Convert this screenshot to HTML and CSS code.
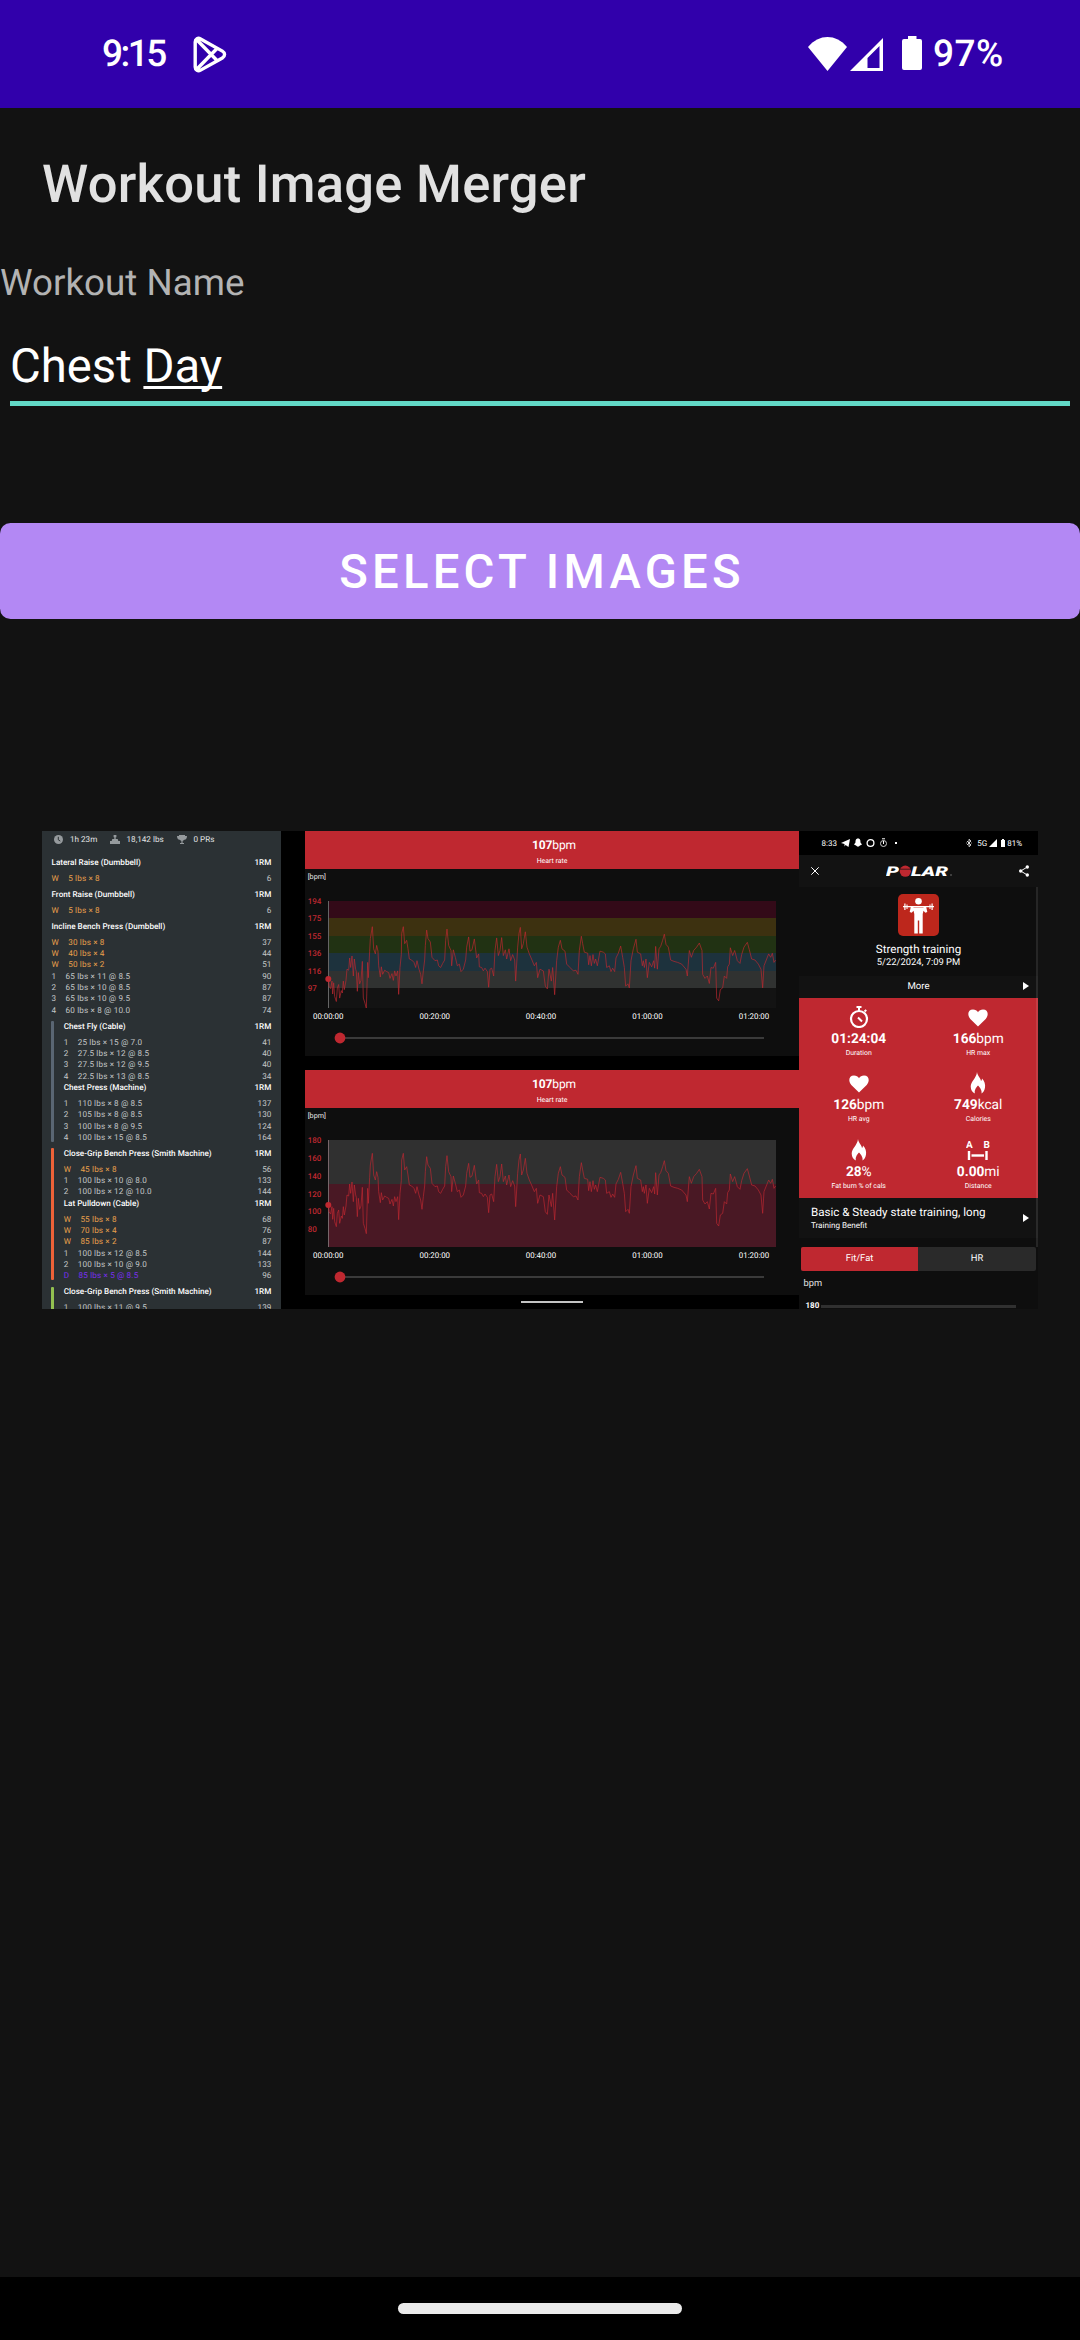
FILE: index.html
```html
<!DOCTYPE html>
<html lang="en">
<head>
<meta charset="utf-8">
<title>Workout Image Merger</title>
<link rel="stylesheet" href="styles.css">
</head>
<body>
<header class="status">
  <span class="clock">9:15</span>
  <svg class="play" viewBox="0 0 34 37" width="34" height="37"><path d="M2.200 6v25c0 3.200 2.800 4.600 5.400 3.100l21.800-12.200c2.900-1.700 2.900-5.100 0-6.800L7.600 2.900C5 1.400 2.200 2.800 2.200 6zM3.500 3.500l20.500 21M3.500 33.500l20.500-21" fill="none" stroke="#fff" stroke-width="3.400"/></svg>
  <svg class="wifi" viewBox="0 0 39 34" width="39" height="34"><path d="M0 10C11-3.300 28-3.300 39 10L19.500 34z" fill="#fff"/></svg>
  <svg class="signal" viewBox="0 0 33 33" width="33" height="33"><path d="M33 0v33H0zM29.500 8L17.500 20v10h12z" fill="#fff" fill-rule="evenodd"/></svg>
  <svg class="battery" viewBox="0 0 20 34" width="20" height="34"><path d="M6 0h8.500v3H18a2 2 0 0 1 2 2v27a2 2 0 0 1-2 2H2a2 2 0 0 1-2-2V5a2 2 0 0 1 2-2h4z" fill="#fff"/></svg>
  <span class="percent">97%</span>
</header>

<main class="app">
  <h1 class="title">Workout Image Merger</h1>
  <div class="label">Workout Name</div>
  <div class="field">Chest <span class="composing">Day</span></div>
  <button class="select">SELECT IMAGES</button>

  <section class="merged">
    <article class="log">
      <div class="summary">
        <svg class="s-clock" viewBox="0 0 9 9" width="9" height="9"><circle cx="4.500" cy="4.500" r="4.500" fill="#959a9d"/><path d="M4.300 1.800v3l2 1.300" fill="none" stroke="#2b3134" stroke-width="1"/></svg>
        <span class="s-time">1h 23m</span>
        <svg class="s-weight" viewBox="0 0 10 9" width="10" height="9"><path d="M3.600 0h2.800v2.200H5.700V4h2l.6 2H10v3H0V6h1.700l.6-2h2V2.200h-.7z" fill="#959a9d"/></svg>
        <span class="s-lbs">18,142 lbs</span>
        <svg class="s-cup" viewBox="0 0 10 9" width="10" height="9"><path d="M2 0h6v1h2c0 2.500-1 3.500-2.600 3.800L5.600 6v2H7v1H3V8h1.400V6L2.600 4.800C1 4.500 0 3.500 0 1h2z" fill="#959a9d"/></svg>
        <span>0 PRs</span>
      </div>
      <div class="exercise">
        <div class="name"><span>Lateral Raise (Dumbbell)</span><b>1RM</b></div>
        <div class="set warm"><i>W</i><span>5 lbs × 8</span><b>6</b></div>
      </div>
      <div class="exercise">
        <div class="name"><span>Front Raise (Dumbbell)</span><b>1RM</b></div>
        <div class="set warm"><i>W</i><span>5 lbs × 8</span><b>6</b></div>
      </div>
      <div class="exercise">
        <div class="name"><span>Incline Bench Press (Dumbbell)</span><b>1RM</b></div>
        <div class="set warm"><i>W</i><span>30 lbs × 8</span><b>37</b></div>
        <div class="set warm"><i>W</i><span>40 lbs × 4</span><b>44</b></div>
        <div class="set warm"><i>W</i><span>50 lbs × 2</span><b>51</b></div>
        <div class="set"><i>1</i><span>65 lbs × 11 @ 8.5</span><b>90</b></div>
        <div class="set"><i>2</i><span>65 lbs × 10 @ 8.5</span><b>87</b></div>
        <div class="set"><i>3</i><span>65 lbs × 10 @ 9.5</span><b>87</b></div>
        <div class="set"><i>4</i><span>60 lbs × 8 @ 10.0</span><b>74</b></div>
      </div>
      <div class="superset slate">
        <div class="name"><span>Chest Fly (Cable)</span><b>1RM</b></div>
        <div class="set"><i>1</i><span>25 lbs × 15 @ 7.0</span><b>41</b></div>
        <div class="set"><i>2</i><span>27.5 lbs × 12 @ 8.5</span><b>40</b></div>
        <div class="set"><i>3</i><span>27.5 lbs × 12 @ 9.5</span><b>40</b></div>
        <div class="set"><i>4</i><span>22.5 lbs × 13 @ 8.5</span><b>34</b></div>
        <div class="name"><span>Chest Press (Machine)</span><b>1RM</b></div>
        <div class="set"><i>1</i><span>110 lbs × 8 @ 8.5</span><b>137</b></div>
        <div class="set"><i>2</i><span>105 lbs × 8 @ 8.5</span><b>130</b></div>
        <div class="set"><i>3</i><span>100 lbs × 8 @ 9.5</span><b>124</b></div>
        <div class="set"><i>4</i><span>100 lbs × 15 @ 8.5</span><b>164</b></div>
      </div>
      <div class="superset orange">
        <div class="name"><span>Close-Grip Bench Press (Smith Machine)</span><b>1RM</b></div>
        <div class="set warm"><i>W</i><span>45 lbs × 8</span><b>56</b></div>
        <div class="set"><i>1</i><span>100 lbs × 10 @ 8.0</span><b>133</b></div>
        <div class="set"><i>2</i><span>100 lbs × 12 @ 10.0</span><b>144</b></div>
        <div class="name"><span>Lat Pulldown (Cable)</span><b>1RM</b></div>
        <div class="set warm"><i>W</i><span>55 lbs × 8</span><b>68</b></div>
        <div class="set warm"><i>W</i><span>70 lbs × 4</span><b>76</b></div>
        <div class="set warm"><i>W</i><span>85 lbs × 2</span><b>87</b></div>
        <div class="set"><i>1</i><span>100 lbs × 12 @ 8.5</span><b>144</b></div>
        <div class="set"><i>2</i><span>100 lbs × 10 @ 9.0</span><b>133</b></div>
        <div class="set drop"><i>D</i><span>85 lbs × 5 @ 8.5</span><b>96</b></div>
      </div>
      <div class="superset green">
        <div class="name"><span>Close-Grip Bench Press (Smith Machine)</span><b>1RM</b></div>
        <div class="set"><i>1</i><span>100 lbs × 11 @ 9.5</span><b>139</b></div>
      </div>
    </article>

    <article class="charts">
      <div class="chart">
        <div class="rate"><div class="bpm"><b>107</b>bpm</div><div class="caption">Heart rate</div></div>
        <svg class="plot" viewBox="0 0 494 187" width="494" height="187">
          <defs>
            <polyline id="trace" fill="none" stroke="#bf2830" stroke-width="2.200" stroke-opacity=".9" points="115,437 117,455 122,462 126,440 128,478 131,445 134,485 139,500 142,460 146,450 149,490 154,468 157,475 160,440 163,465 168,438 171,405 176,408 179,372 182,400 186,366 190,425 193,375 197,405 199,412 202,470 205,415 209,448 213,438 217,382 220,490 225,505 229,521 233,385 235,430 239,352 241,315 247,280 251,345 256,360 260,335 264,352 266,395 271,428 274,398 278,420 284,408 290,412 296,415 300,432 306,418 310,438 314,410 318,425 323,410 326,479 330,400 334,362 335,300 340,280 344,330 350,320 354,345 358,375 365,378 372,385 377,400 381,380 387,405 392,420 396,448 400,410 404,378 406,335 410,290 414,315 421,325 426,370 435,380 442,378 446,395 452,400 458,388 464,378 467,320 471,287 476,335 483,350 485,395 490,348 496,370 502,395 508,390 513,412 520,405 527,378 530,340 536,310 540,352 546,348 553,316 560,372 566,360 568,398 575,400 580,410 585,402 592,412 596,458 600,405 605,402 611,425 615,350 620,313 625,365 630,350 635,312 640,365 646,348 650,375 657,345 662,380 668,362 674,378 677,440 683,340 687,300 691,282 695,345 700,330 706,295 711,340 718,360 726,378 733,395 739,385 743,430 750,405 760,410 766,455 772,463 777,405 784,440 788,400 794,480 800,380 805,340 811,320 816,345 825,352 830,390 840,400 850,410 858,408 864,420 868,350 874,308 878,330 883,355 893,358 896,392 900,365 904,395 909,362 913,388 917,375 922,395 930,352 940,355 946,360 950,400 958,395 963,412 968,402 974,412 978,372 985,358 992,337 998,370 1003,400 1007,455 1014,448 1018,460 1023,380 1030,345 1038,317 1042,355 1052,360 1057,395 1060,380 1063,400 1068,375 1072,430 1078,385 1085,398 1091,380 1094,402 1097,338 1102,405 1107,345 1112,338 1118,320 1123,302 1128,332 1135,340 1142,378 1152,382 1163,385 1175,390 1188,405 1192,425 1198,350 1204,370 1211,350 1220,340 1228,328 1236,350 1238,420 1245,432 1252,425 1258,447 1263,400 1270,402 1277,385 1280,490 1286,498 1291,465 1298,460 1303,425 1310,432 1313,398 1318,390 1321,342 1328,365 1334,350 1342,380 1350,388 1355,362 1362,340 1372,326 1378,348 1385,375 1395,378 1405,390 1413,405 1418,460 1422,395 1430,375 1436,360 1442,370 1447,358 1452,385 1457,378"/>
            <clipPath id="area"><rect x="23" y="32" width="448" height="107"/></clipPath>
          </defs>
          <rect x="23.500" y="32" width="447.500" height="17" fill="#330a18"/>
          <rect x="23.500" y="49" width="447.500" height="18" fill="#3d3110"/>
          <rect x="23.500" y="67" width="447.500" height="17" fill="#213213"/>
          <rect x="23.500" y="84" width="447.500" height="18" fill="#1d323d"/>
          <rect x="23.500" y="102" width="447.500" height="17" fill="#303231"/>
          <rect x="23.500" y="119" width="447.500" height="20" fill="#131313"/>
          <rect x="23" y="32" width="1" height="107" fill="#656565"/>
          <g clip-path="url(#area)"><use href="#trace" transform="translate(-15 -37.500) scale(.33333 .34)"/></g>
          <circle cx="23.300" cy="110" r="3" fill="#bf2830"/>
          <g class="axis"><text x="2.700" y="35">194</text><text x="2.700" y="52">175</text><text x="2.700" y="70">155</text><text x="2.700" y="87">136</text><text x="2.700" y="105">116</text><text x="2.700" y="122">97</text></g>
          <text class="unit" x="2.700" y="9.500">[bpm]</text>
          <g class="times"><text x="23.200" y="150">00:00:00</text><text x="129.800" y="150">00:20:00</text><text x="236" y="150">00:40:00</text><text x="342.500" y="150">01:00:00</text><text x="449" y="150">01:20:00</text></g>
          <rect x="35" y="168" width="424" height="2" fill="#3a3a3a"/>
          <circle cx="35" cy="169" r="5.400" fill="#bf2830"/>
        </svg>
      </div>
      <div class="chart">
        <div class="rate"><div class="bpm"><b>107</b>bpm</div><div class="caption">Heart rate</div></div>
        <svg class="plot" viewBox="0 0 494 187" width="494" height="187">
          <rect x="23.500" y="32" width="447.500" height="44" fill="#303030"/>
          <rect x="23.500" y="76" width="447.500" height="63" fill="#491824"/>
          <rect x="23" y="32" width="1" height="107" fill="#77666a"/>
          <use href="#trace" transform="translate(-15 -48) scale(.33333)"/>
          <circle cx="23.300" cy="97" r="3" fill="#bf2830"/>
          <g class="axis"><text x="2.700" y="35">180</text><text x="2.700" y="53">160</text><text x="2.700" y="71">140</text><text x="2.700" y="88.500">120</text><text x="2.700" y="106">100</text><text x="2.700" y="124">80</text></g>
          <text class="unit" x="2.700" y="9.500">[bpm]</text>
          <g class="times"><text x="23.200" y="150">00:00:00</text><text x="129.800" y="150">00:20:00</text><text x="236" y="150">00:40:00</text><text x="342.500" y="150">01:00:00</text><text x="449" y="150">01:20:00</text></g>
          <rect x="35" y="168" width="424" height="2" fill="#3a3a3a"/>
          <circle cx="35" cy="169" r="5.400" fill="#bf2830"/>
        </svg>
      </div>
      <div class="home-line"></div>
    </article>

    <article class="polar">
      <div class="p-status">
        <span>8:33</span>
        <svg viewBox="0 0 52 10" width="52" height="10"><path d="M0 5l9-4-1.500 8-3-2-1 1.500V6z" fill="#fff"/><path d="M17 0.500c2.500 0 2.500 2.500 2.500 4l1.500 2-2 1c-1 1.500-3 1.500-4 0l-2-1 1.500-2c0-1.500 0-4 2.500-4z" fill="#fff"/><circle cx="29.500" cy="5" r="3.400" fill="none" stroke="#fff" stroke-width="1.300"/><path d="M41 .8h3" stroke="#fff"/><circle cx="42.500" cy="5.500" r="3" fill="none" stroke="#ccc" stroke-width="1"/><path d="M42.500 3v3" stroke="#fff"/></svg>
        <i class="dot"></i>
        <svg class="p-bt" viewBox="0 0 6 8" width="6" height="8"><path d="M1 2l4 4-2 1.700V.3L5 2 1 6M0 4h.8M5.300 4H6" fill="none" stroke="#fff" stroke-width=".8"/></svg>
        <span class="p-5g">5G</span>
        <svg class="p-sig" viewBox="0 0 8 8" width="8" height="8"><path d="M8 0v8H0z" fill="#fff"/></svg>
        <svg class="p-bat" viewBox="0 0 4 8" width="4" height="8"><path d="M1 0h2v1h1v7H0V1h1z" fill="#fff"/></svg>
        <span>81%</span>
      </div>
      <div class="p-bar">
        <svg viewBox="0 0 8 8" width="8" height="8"><path d="M.3.300l7.400 7.400M7.700.300L.3 7.700" stroke="#fff" stroke-width="1"/></svg>
        <svg class="logo" viewBox="0 0 67 14" width="67" height="14"><text x="0" y="11.800" textLength="13" lengthAdjust="spacingAndGlyphs">P</text><circle cx="19.300" cy="7.200" r="5.600" fill="#bf2830"/><path d="M13.500 5.200h11.500" stroke="#121212" stroke-width=".7"/><text x="25" y="11.800" textLength="37" lengthAdjust="spacingAndGlyphs">LAR</text><circle cx="65" cy="11" r=".8" fill="#777"/></svg>
        <svg viewBox="0 0 10 12" width="10" height="12"><path d="M8.300 2L1.700 6l6.600 4" fill="none" stroke="#fff" stroke-width="1"/><circle cx="8.300" cy="2" r="1.700" fill="#fff"/><circle cx="1.700" cy="6" r="1.700" fill="#fff"/><circle cx="8.300" cy="10" r="1.700" fill="#fff"/></svg>
      </div>
      <div class="session">
        <svg viewBox="0 0 41 42" width="41" height="42"><rect width="41" height="42" rx="5" fill="#bd271c"/><g fill="#fff"><circle cx="20.500" cy="7.300" r="3.300"/><path d="M13 12l3 1.500h9l3-1.500 1.300 6-2 .7-1.800-2-.8 3.300V39.500h-3.500V26.500h-1.400V39.500h-3.500V20l-.8-3.300-1.800 2-2-.7z"/><path d="M5 12h31v1.200H5zM6.300 9.500h1.200v6.500H6.300zM8.500 10.500h1v4.500h-1zM33.500 9.500h1.200v6.500h-1.200zM31.500 10.500h1v4.500h-1z"/></g></svg>
        <div class="kind">Strength training</div>
        <div class="date">5/22/2024, 7:09 PM</div>
      </div>
      <div class="more"><span>More</span><i class="arrow"></i></div>
      <div class="metrics">
        <div class="metric"><svg viewBox="0 0 20 22" width="20" height="22"><circle cx="10" cy="13" r="8" fill="none" stroke="#fff" stroke-width="2.200"/><path d="M7.500 1h5M10 1v4M15.500 5.500l1.800-1.500M9 11.500l4 4" stroke="#fff" stroke-width="2"/></svg><div class="value"><b>01:24:04</b></div><div class="what">Duration</div></div>
        <div class="metric"><svg viewBox="0 0 20 22" width="20" height="22"><path d="M10 20.500L2.300 13C-1 9-.3 3.500 5 3.500c2.200 0 4 1 5 2.700 1-1.700 2.800-2.700 5-2.700 5.300 0 6 5.500 2.700 9.500z" fill="#fff"/></svg><div class="value"><b>166</b>bpm</div><div class="what">HR max</div></div>
        <div class="metric"><svg viewBox="0 0 20 22" width="20" height="22"><path d="M10 20.500L2.300 13C-1 9-.3 3.500 5 3.500c2.200 0 4 1 5 2.700 1-1.700 2.800-2.700 5-2.700 5.300 0 6 5.500 2.700 9.500z" fill="#fff"/></svg><div class="value"><b>126</b>bpm</div><div class="what">HR avg</div></div>
        <div class="metric"><svg viewBox="0 0 20 22" width="20" height="22"><path d="M9 0c.5 4 3.500 5.500 4 9 .8-.7 1-1.600 1-2.500 2.500 2.500 3.500 6 3 9-.4 3-1.700 5-3.500 6 .7-3-1.500-6-3.500-8-2 2-4 5-3 8-2.500-1-4.300-3.500-4.300-7C2.700 9.500 8.500 6 9 0z" fill="#fff"/></svg><div class="value"><b>749</b>kcal</div><div class="what">Calories</div></div>
        <div class="metric"><svg viewBox="0 0 20 22" width="20" height="22"><path d="M9 0c.5 4 3.500 5.500 4 9 .8-.7 1-1.600 1-2.500 2.500 2.500 3.500 6 3 9-.4 3-1.700 5-3.500 6 .7-3-1.500-6-3.500-8-2 2-4 5-3 8-2.500-1-4.300-3.500-4.300-7C2.700 9.500 8.500 6 9 0z" fill="#fff"/></svg><div class="value"><b>28</b>%</div><div class="what">Fat burn % of cals</div></div>
        <div class="metric"><svg viewBox="0 0 24 22" width="24" height="22"><text class="ab" x="0" y="9">A</text><text class="ab" x="17.500" y="9">B</text><path d="M3 12v9M20.500 12v9" stroke="#fff" stroke-width="2.400"/><path d="M5.500 16.500h12.500" stroke="#fff" stroke-width="2.400"/></svg><div class="value"><b>0.00</b>mi</div><div class="what">Distance</div></div>
      </div>
      <div class="benefit"><div><div class="b-title">Basic &amp; Steady state training, long</div><div class="b-sub">Training Benefit</div></div><i class="arrow"></i></div>
      <div class="tabs"><span class="on">Fit/Fat</span><span>HR</span></div>
      <div class="p-unit">bpm</div>
      <div class="p-axis"><span>180</span><i></i></div>
      <i class="scroll"></i>
    </article>
  </section>
</main>
<footer class="nav"><i class="pill"></i></footer>
</body>
</html>
```
FILE: styles.css
```css
* { box-sizing: border-box; }
html, body { margin: 0; }
body {
  width: 1080px;
  height: 2340px;
  display: flex;
  flex-direction: column;
  overflow: hidden;
  background: #121212;
  color: #fff;
  font-family: Roboto, "Liberation Sans", sans-serif;
  text-rendering: geometricPrecision;
}
svg { display: block; flex: none; }
i { font-style: normal; }

.status {
  height: 108px;
  flex: none;
  display: flex;
  align-items: center;
  padding: 0 76px 0 102px;
  background: #3100ab;
  font-size: 37px;
  font-weight: 500;
  white-space: nowrap;
}
.clock { width: 91px; letter-spacing: -2.500px; }
.wifi { margin: -1px 3px 0 auto; }
.signal { margin-right: 19px; }
.battery { margin: -2px 11px 0 0; }
.percent { width: 71px; letter-spacing: .5px; }

.app { flex: 1; display: flex; flex-direction: column; }
.title {
  margin: 49px 0 0 42px;
  font-size: 52.5px;
  line-height: 54px;
  font-weight: 500;
  letter-spacing: .25px;
  color: #e1e1e1;
}
.label {
  margin-top: 50px;
  font-size: 36.75px;
  line-height: 44px;
  color: #b3b3b3;
}
.field {
  margin: 36px 10px 0;
  height: 65px;
  border-bottom: 5px solid #62d9c6;
  font-size: 47.25px;
  line-height: 50px;
}
.composing {
  text-decoration: underline;
  text-decoration-thickness: 2.500px;
  text-underline-offset: 3.500px;
  text-decoration-skip-ink: none;
}
.select {
  margin: 117px 0 0;
  padding: 2px 0 0 4px;
  height: 96px;
  border: 0;
  border-radius: 10.5px;
  background: #b388f4;
  color: #fff;
  font: 500 47.25px Roboto, sans-serif;
  letter-spacing: .0893em;
}

.merged {
  margin: 212px 42px 0;
  height: 478px;
  display: flex;
  background: #000;
  overflow: hidden;
  white-space: nowrap;
}

/* Lifting log */
.log {
  width: 239px;
  margin-right: 24px;
  flex: none;
  padding: 0 9.700px 0 9.500px;
  background: #2b3134;
  font-size: 8.150px;
  line-height: 11.333px;
}
.summary { display: flex; align-items: center; height: 17px; margin: 0 0 8.700px 2.500px; color: #e2e4e5; }
.s-time { width: 40px; margin-left: 7px; }
.s-lbs { width: 50.500px; margin-left: 6.500px; }
.s-cup { margin-right: 6.500px; }
.exercise { margin-bottom: 4.667px; }
.name, .set { display: flex; }
.name { margin-bottom: 4.667px; font-weight: 500; }
.name b { margin-left: auto; font-weight: 500; }
.set { color: #c3c6c7; }
.set i { margin-right: 9.500px; }
.set span { letter-spacing: .15px; }
.set b { margin-left: auto; font-weight: 400; color: #c3c6c7; }
.warm { color: #e9a04c; }
.drop { color: #7a2ff0; }
.superset { position: relative; padding-left: 12.200px; margin-bottom: 4.667px; }
.superset::before {
  content: "";
  position: absolute;
  left: -.5px;
  top: .5px;
  bottom: 1.500px;
  width: 3px;
  border-radius: 1px;
}
.slate::before { background: #5a6673; }
.orange::before { background: #ee6238; }
.green::before { background: #92c050; }

/* Heart rate charts */
.charts { width: 494px; flex: none; }
.chart { height: 225px; margin-bottom: 14px; background: #0e0e0e; }
.chart + .chart { margin-bottom: 6px; }
.rate { height: 38px; padding-top: 5px; background: #bf2830; text-align: center; }
.bpm { padding-left: 4px; font-size: 12px; line-height: 18px; letter-spacing: -.1px; }
.bpm b { font-weight: 700; }
.caption { font-size: 6.900px; line-height: 14px; }
.axis { fill: #bf2830; font-size: 8px; font-weight: 500; }
.unit { fill: #e8e8e8; font-size: 7.200px; }
.times { fill: #fff; font-size: 7.900px; text-anchor: middle; }
.home-line { width: 62px; height: 2px; margin: 0 auto; background: #c4c4c4; }

/* Training session */
.polar { position: relative; width: 239px; flex: none; background: #0e0e0e; }
.p-status {
  height: 24px;
  display: flex;
  align-items: center;
  padding: 0 16px 0 22.500px;
  background: #000;
  font-size: 8px;
}
.p-status > svg:first-of-type { margin-left: 4px; }
.dot { width: 2px; height: 2px; margin-left: 2px; background: #fff; }
.p-bt { margin-left: auto; }
.p-5g { margin: 0 2px 0 5px; }
.p-bat { margin: 0 2px 0 4px; }
.p-bar {
  height: 32px;
  display: flex;
  align-items: center;
  justify-content: space-between;
  padding: 0 9px 0 12px;
  background: #121212;
}
.logo { margin-left: 1px; }
.logo text { fill: #fff; font-size: 13.500px; font-weight: 900; font-style: italic; }
.session {
  height: 89px;
  display: flex;
  flex-direction: column;
  align-items: center;
  padding-top: 7px;
}
.kind { margin-top: 6px; font-size: 11.600px; line-height: 14px; }
.date { font-size: 9.400px; line-height: 14px; }
.more {
  position: relative;
  height: 22px;
  line-height: 21.500px;
  background: #121212;
  text-align: center;
  font-size: 9.600px;
}
.arrow {
  border: 4.500px solid transparent;
  border-left: 6px solid #fff;
  border-right: 0;
}
.more .arrow { position: absolute; right: 9px; top: 5.500px; }
.metrics {
  height: 200px;
  display: grid;
  grid-template-columns: 1fr 1fr;
  grid-auto-rows: 66.667px;
  background: #bf2830;
}
.metric { display: flex; flex-direction: column; align-items: center; padding-top: 7.500px; }
.value { margin-top: 3px; font-size: 13.700px; line-height: 17px; }
.value b { font-weight: 700; }
.what { font-size: 6.900px; line-height: 10px; }
.ab { fill: #fff; font-size: 10px; font-weight: 700; }
.benefit {
  height: 40px;
  display: flex;
  align-items: center;
  justify-content: space-between;
  padding: 0 9px 0 12px;
  background: #121212;
}
.b-title { font-size: 11.600px; line-height: 14px; }
.b-sub { font-size: 8.100px; line-height: 12px; }
.tabs {
  display: grid;
  grid-template-columns: 117px 118px;
  height: 24px;
  margin: 9px 2px 0;
  border-radius: 2px;
  overflow: hidden;
  background: #2a2a2a;
  font-size: 9.400px;
  line-height: 24px;
  text-align: center;
}
.tabs .on { background: #bf2830; }
.p-unit { margin: 7px 0 0 4.500px; font-size: 9.300px; line-height: 12px; color: #e2e2e2; }
.p-axis {
  display: flex;
  margin: 10.500px 22px 0 6.500px;
  height: 9px;
  font-size: 8px;
  font-weight: 700;
  line-height: 9px;
}
.p-axis i { flex: 1; height: 3px; margin: 4px 0 0 2px; background: #303030; }
.scroll { position: absolute; right: 0; top: 56px; width: 2px; height: 360px; background: rgba(255, 255, 255, .1); }

.nav { height: 63px; flex: none; display: flex; justify-content: center; padding-top: 26px; background: #000; }
.pill { width: 284px; height: 11px; border-radius: 6px; background: #ebebeb; }
```
